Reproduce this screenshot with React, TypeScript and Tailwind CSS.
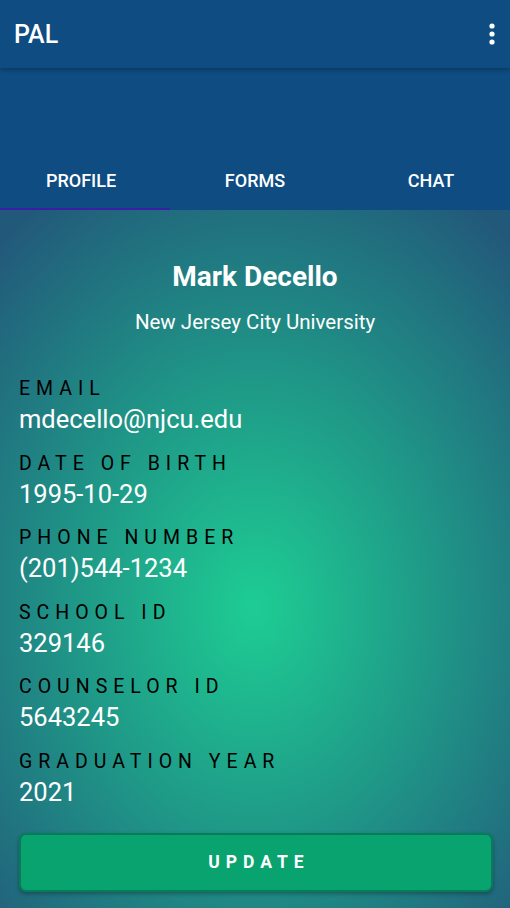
import React from "react";

const fields = [
  ["EMAIL", "mdecello@njcu.edu"],
  ["DATE OF BIRTH", "1995-10-29"],
  ["PHONE NUMBER", "(201)544-1234"],
  ["SCHOOL ID", "329146"],
  ["COUNSELOR ID", "5643245"],
  ["GRADUATION YEAR", "2021"],
];

export default function App() {
  return (
    <div
      className="w-[510px] h-[908px] flex flex-col overflow-hidden"
      style={{ fontFamily: "Roboto, 'Noto Sans', sans-serif" }}
    >
      <div className="bg-[#0e4c82] flex flex-col">
        <div className="h-[68px] flex items-center justify-between pl-[14px] pr-[12px] shadow-[0_2px_4px_rgba(0,0,0,0.25)] relative z-10">
          <span className="text-white text-[25px] font-medium leading-none">PAL</span>
          <svg width="8" height="24" viewBox="0 0 8 24" className="mr-[2px]">
            <circle cx="4" cy="4" r="2.6" fill="white" />
            <circle cx="4" cy="12" r="2.6" fill="white" />
            <circle cx="4" cy="20" r="2.6" fill="white" />
          </svg>
        </div>
        <div className="h-[142px] flex flex-col justify-end">
          <div className="flex h-[59px]">
            <div className="flex-1 flex flex-col">
              <div className="flex-1 flex items-center justify-center pr-[8px] text-white text-[18px] font-medium pt-[2px]">PROFILE</div>
              <div className="h-[2px] bg-[#3a1fa6]" />
            </div>
            <div className="flex-1 flex flex-col">
              <div className="flex-1 flex items-center justify-center text-white text-[18px] font-medium pt-[2px]">FORMS</div>
              <div className="h-[2px]" />
            </div>
            <div className="flex-1 flex flex-col">
              <div className="flex-1 flex items-center justify-center pl-[12px] text-white text-[18px] font-medium pt-[2px]">CHAT</div>
              <div className="h-[2px]" />
            </div>
          </div>
        </div>
      </div>
      <div className="flex-1 bg-[radial-gradient(ellipse_75%_70%_at_50%_57%,#1ecd93_0%,#1f9a88_45%,#22597a_100%)] flex flex-col px-[19px]">
        <div className="text-center text-white text-[28px] font-bold mt-[51px] leading-[32px]">Mark Decello</div>
        <div className="text-center text-white text-[20.5px] mt-[17px] leading-[24px]">New Jersey City University</div>
        <div className="flex flex-col mt-[42px]">
          {fields.map(([label, value]) => (
            <div key={label} className="flex flex-col h-[74.6px]">
              <div className="text-black text-[19.5px] tracking-[6px] leading-[26px]">{label}</div>
              <div className="text-white text-[25.5px] leading-[32px] mt-[1px]">{value}</div>
            </div>
          ))}
        </div>
        <div className="mt-[9px] h-[59px] mr-[-2px] rounded-[7px] bg-[#08a36e] border-2 border-[#077c58] shadow-[0_2px_4px_rgba(0,0,0,0.3)] flex items-center justify-center">
          <span className="text-white text-[17.5px] font-bold tracking-[6px] pl-[6px]">UPDATE</span>
        </div>
      </div>
    </div>
  );
}
